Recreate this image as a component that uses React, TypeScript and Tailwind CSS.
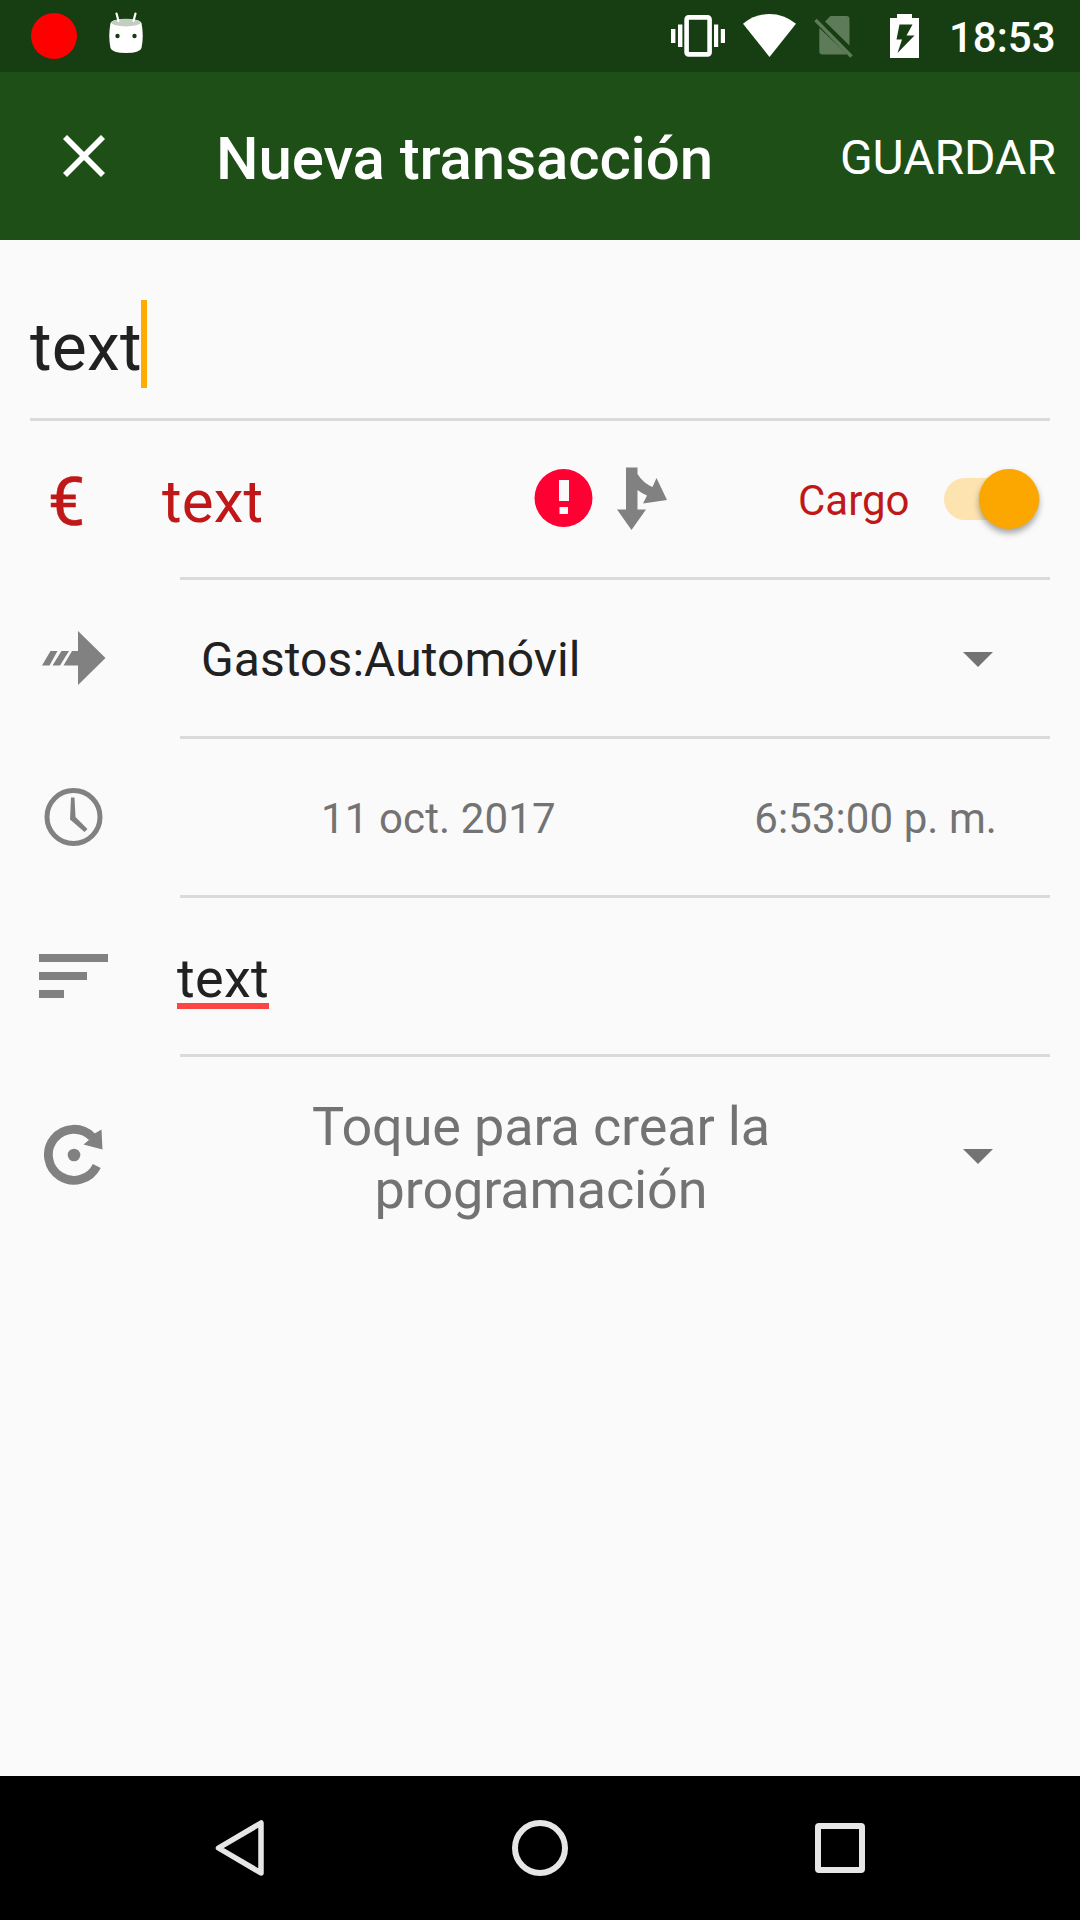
import React from "react";

function StatusBar() {
  return (
    <div className="flex h-[72px] bg-[#173d12]">
      <div className="ml-[31px] mt-[13px] h-[46px] w-[46px] rounded-full bg-[#ff0000]" />
      <svg className="ml-8 mt-3 h-[42px] w-[34px]" viewBox="0 0 34 42">
        <path d="M1.500 11Q3 7 17 7Q31 7 32.500 11Q35 24 32.500 36Q31 41 17 41Q3 41 1.500 36Q-1 24 1.500 11Z" fill="#fff" />
        <ellipse cx="17" cy="10.6" rx="14.8" ry="3.8" fill="#c3cec1" />
        <path d="M7.500 1.500L9.500 9M26.500 1.500L24.500 9" stroke="#fff" strokeWidth="2.200" strokeLinecap="round" />
        <circle cx="8.500" cy="24" r="2.200" fill="#173d12" />
        <circle cx="25.500" cy="24" r="2.200" fill="#173d12" />
      </svg>
      <svg className="ml-[528px] mt-[15px] h-[42px] w-[54px]" viewBox="0 0 54 42" fill="#fff">
        <rect x="15.600" y="2.400" width="23" height="37" rx="2" fill="none" stroke="#fff" strokeWidth="4.600" />
        <rect x="0" y="14" width="4.400" height="14" />
        <rect x="7" y="9.500" width="4.400" height="22.500" />
        <rect x="43" y="9.500" width="4.200" height="22.500" />
        <rect x="49.800" y="14" width="4.200" height="14" />
      </svg>
      <svg className="ml-[18px] mt-[14px] h-[43px] w-[53px]" viewBox="0 0 53 43" fill="#fff">
        <path d="M0 9.700Q12 0 26.500 0Q41 0 53 9.700L26.500 43Z" />
      </svg>
      <svg className="ml-[18px] mt-4 h-[42px] w-[39px]" viewBox="0 0 39 42" fill="#5d7a59">
        <path d="M11 5.500L16.500 0H32.500Q35.500 0 35.500 3V29.500L11 5.500ZM5.300 12L33 38Q32.500 38.500 31.500 38.500H8.500Q5.300 38.500 5.300 35.500Z" />
        <path d="M1.500 4L37.500 40.500" stroke="#5d7a59" strokeWidth="3.500" />
      </svg>
      <svg className="ml-[37px] mt-[14px] h-11 w-[29px]" viewBox="0 0 29 44">
        <path d="M0 4H7V0H22V4H29V44H0Z" fill="#fff" />
        <path d="M9.500 10.500H22.500L16.500 21.500H24.500L7.500 39L12 25.500H6.500Z" fill="#173d12" />
      </svg>
      <div className="ml-[30px] mt-[14px] whitespace-nowrap text-[42px] font-medium leading-[48px] text-white">18:53</div>
    </div>
  );
}

function AppBar() {
  return (
    <div className="flex h-[168px] bg-[#1d4f17] text-white">
      <svg className="ml-[63px] mt-[63px] h-[42px] w-[42px]" viewBox="0 0 42 42">
        <path d="M2 2L40 40M40 2L2 40" stroke="#fff" strokeWidth="5.800" />
      </svg>
      <div className="ml-[111px] mt-[51px] w-[500px] whitespace-nowrap text-[60px] font-medium leading-[72px] tracking-[-0.1px]">Nueva transacción</div>
      <div className="mr-6 mt-[58px] ml-auto whitespace-nowrap text-[48px] leading-[56px]">GUARDAR</div>
    </div>
  );
}

function Row({ icon, children }: { icon: React.ReactNode; children: React.ReactNode }) {
  return (
    <div className="flex h-[159px]">
      <div className="w-[180px] shrink-0">{icon}</div>
      <div className="mr-[30px] flex flex-1 border-b-[3px] border-[#dadada]">{children}</div>
    </div>
  );
}

function Caret({ className }: { className: string }) {
  return (
    <svg className={className} viewBox="0 0 30 15">
      <path d="M0 0H30L15 15Z" fill="#737373" />
    </svg>
  );
}

export default function App() {
  return (
    <div className="flex h-[1920px] w-[1080px] flex-col overflow-hidden bg-[#fafafa] font-[Roboto,sans-serif] text-[#212121]">
      <StatusBar />
      <AppBar />
      <main className="flex-1">
        <div className="mx-[30px] flex h-[181px] border-b-[3px] border-[#dadada]">
          <div className="mt-16 w-[111px] whitespace-nowrap text-[66px] leading-[88px] tracking-[0.25px]">text</div>
          <div className="mt-[60px] h-[88px] w-1.5 bg-[#ffab00]" />
        </div>
        <Row
          icon={
            <div className="flex text-[#c01818]">
              <div className="ml-12 mt-[42px] w-[114px] shrink-0 text-[66px] leading-[80px] [-webkit-text-stroke:0.6px_#c01818]">€</div>
              <div className="mt-[45px] whitespace-nowrap text-[60px] leading-[72px] tracking-[0.1px]">text</div>
            </div>
          }
        >
          <svg className="ml-[354px] mt-[48px] h-[58px] w-[59px]" viewBox="0 0 59 58">
            <circle cx="29.500" cy="29" r="29" fill="#ff0033" />
            <path d="M25 11H35V32H25ZM25.500 38H34V45H25.500Z" fill="#fafafa" />
          </svg>
          <svg className="ml-6 mt-[46px] h-[63px] w-[50px]" viewBox="0 0 50 63">
            <path d="M9 0.500H20.500V7Q26 16 35.500 20L39.500 11L50 33L26 36.500L30 28.500Q25 26.500 20.500 23V42.500H29L14.500 63L0 42.500H9Z" fill="#818181" />
          </svg>
          <div className="ml-[131px] mt-14 whitespace-nowrap text-[42px] leading-[48px] text-[#c01818]">Cargo</div>
          <div className="ml-auto mr-[10px] mt-[57px] flex h-[42px] w-[96px] items-center justify-end rounded-full bg-[#fde3b0]">
            <div className="mb-px mr-px h-[60px] w-[60px] shrink-0 rounded-full bg-[#fba700] shadow-[0_4px_6px_rgba(0,0,0,0.35)]" />
          </div>
        </Row>
        <Row
          icon={
            <svg className="ml-[42px] mt-[51px] h-[54px] w-[64px]" viewBox="0 0 64 54" fill="#818181">
              <path d="M36 0L63.500 27L36 54V34.500H21.500L30 20H36ZM8.500 20H15.500L7.500 34.500H0ZM19.500 20H27L18 34.500H10.500Z" />
            </svg>
          }
        >
          <div className="ml-[21px] mt-[52px] whitespace-nowrap text-[48px] leading-[56px] tracking-[0.07px]">Gastos:Automóvil</div>
          <Caret className="ml-auto mr-[57px] mt-[72px] h-[15px] w-[30px]" />
        </Row>
        <Row
          icon={
            <svg className="ml-11 mt-[49px] h-[58px] w-[59px]" viewBox="0 0 59 58">
              <circle cx="29.500" cy="29" r="26.500" fill="none" stroke="#818181" strokeWidth="5" />
              <path d="M27 9.500H30.500L31.500 29L43.500 41L40.500 44L26 31.500Z" fill="#818181" />
            </svg>
          }
        >
          <div className="ml-[141px] mt-[56px] whitespace-nowrap text-[42px] leading-[48px] tracking-[0.12px] text-[#737373]">11 oct. 2017</div>
          <div className="ml-auto mr-[53px] mt-[56px] whitespace-nowrap text-[42px] leading-[48px] tracking-[0.07px] text-[#737373]">6:53:00 p. m.</div>
        </Row>
        <Row
          icon={
            <div className="flex">
              <div className="ml-[39px] mt-14 flex w-[138px] shrink-0 flex-col gap-[10px]">
                <div className="h-2 w-[69px] bg-[#818181]" />
                <div className="h-2 w-[48px] bg-[#818181]" />
                <div className="h-2 w-[25px] bg-[#818181]" />
              </div>
              <div className="mt-[49px] h-[62px] w-[92px] shrink-0 border-b-[6px] border-[#ff4444] text-[54px] leading-[64px] tracking-[0.3px]">text</div>
            </div>
          }
        >
          {null}
        </Row>
        <div className="flex h-[177px]">
          <svg className="ml-11 mt-[67px] h-[62px] w-[60px]" viewBox="0 0 60 62">
            <path d="M52.800 42A25.500 25.500 0 1 1 48 12.800" fill="none" stroke="#818181" strokeWidth="8.800" />
            <path d="M57.500 5.500L58.500 25.500L39.500 20.500L45 16L49 10.500Z" fill="#818181" />
            <circle cx="30" cy="31" r="6.300" fill="#818181" />
          </svg>
          <div className="ml-[76px] mt-[38px] w-[722px] text-center text-[54px] leading-[63px] tracking-[-0.15px] text-[#737373]">
            Toque para crear la
            <br />
            programación
          </div>
          <Caret className="ml-[61px] mt-[92px] h-[15px] w-[30px]" />
        </div>
      </main>
      <nav className="flex h-36 items-start bg-black">
        <svg className="ml-[215px] mt-[44px] h-[56px] w-[49px]" viewBox="0 0 49 56">
          <path d="M46 3V53L3.500 28Z" fill="none" stroke="#e6e6e6" strokeWidth="5.500" strokeLinejoin="round" />
        </svg>
        <div className="ml-[248px] mt-[44px] h-[56px] w-[56px] rounded-full border-[6px] border-[#e6e6e6]" />
        <div className="ml-[247px] mt-[47px] h-[50px] w-[50px] rounded-[4px] border-[6px] border-[#e6e6e6]" />
      </nav>
    </div>
  );
}
